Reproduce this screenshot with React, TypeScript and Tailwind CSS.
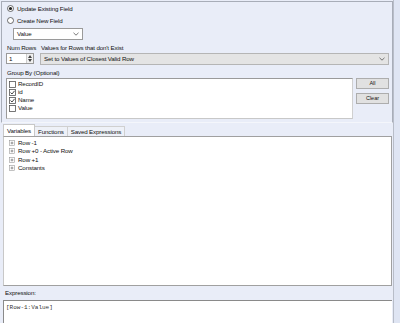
import { ReactNode } from 'react';

const font = "font-['Liberation_Sans',Arial,sans-serif]";
const txt = 'text-[6.2px] tracking-[-0.14px] text-[#111]';

function Radio({ checked, label }: { checked?: boolean; label: string }) {
    return (
        <div className="flex items-center h-[12.5px] pl-[5px] gap-[3px]">
            <svg width="7" height="7" viewBox="0 0 7 7">
                <circle cx="3.5" cy="3.5" r="3" fill="#fff" stroke="#333" strokeWidth="0.7" />
                {checked && <circle cx="3.5" cy="3.5" r="1.6" fill="#222" />}
            </svg>
            <span className={txt}>{label}</span>
        </div>
    );
}

function Check({ checked, label }: { checked?: boolean; label: string }) {
    return (
        <div className="flex items-center h-[8px] pl-[2px] gap-[2px]">
            <svg width="7" height="7" viewBox="0 0 7 7">
                <rect x="0.5" y="0.5" width="6" height="6" fill="#fff" stroke="#555" strokeWidth="0.8" />
                {checked && <path d="M1.5 3.5 L3 5 L5.6 1.8" fill="none" stroke="#333" strokeWidth="0.9" />}
            </svg>
            <span className={`${txt} leading-none`}>{label}</span>
        </div>
    );
}

function Chevron() {
    return (
        <svg width="6" height="4" viewBox="0 0 6 4">
            <path d="M0.5 0.8 L3 3.2 L5.5 0.8" fill="none" stroke="#555" strokeWidth="0.8" />
        </svg>
    );
}

function TreeItem({ children }: { children: ReactNode }) {
    return (
        <div className="flex items-center h-[8.3px] gap-[3px]">
            <svg width="6" height="6" viewBox="0 0 6 6">
                <rect x="0.5" y="0.5" width="5" height="5" fill="#fff" stroke="#999" strokeWidth="0.6" />
                <path d="M1.6 3 H4.4 M3 1.6 V4.4" stroke="#555" strokeWidth="0.6" />
            </svg>
            <span className={`${txt} leading-none`}>{children}</span>
        </div>
    );
}

function Button({ label }: { label: string }) {
    return (
        <div className="h-[11px] w-[33px] border border-[#adadad] bg-[#e1e1e1] flex items-center justify-center text-[5.5px] text-[#111]">
            {label}
        </div>
    );
}

export default function App() {
    return (
        <div className={`${font} w-[400px] h-[323px] bg-[#e9edf8] flex overflow-hidden`}>
            <div className="w-[393px] flex flex-col pl-[1px] pt-[1px]">
                {/* options group */}
                <div className="h-[122px] border-t border-l border-r border-[#a8adb8] border-b-[#f4f6fb] border-b">
                    <Radio checked label="Update Existing Field" />
                    <Radio label="Create New  Field" />
                    <div className="ml-[11px] mt-[1px] w-[70px] h-[12px] bg-white border border-[#9a9a9a] flex items-center justify-between px-[3px]">
                        <span className={txt}>Value</span>
                        <Chevron />
                    </div>
                    <div className={`flex h-[12px] items-end ${txt}`}>
                        <span className="ml-[5px] w-[34px]">Num Rows</span>
                        <span>Values for Rows that don't Exist</span>
                    </div>
                    <div className="flex gap-[6px] ml-[4px] mt-[1px]">
                        <div className="w-[28px] h-[11px] bg-white border border-[#9a9a9a] flex">
                            <span className={`flex-1 pl-[2px] leading-[10px] ${txt}`}>1</span>
                            <div className="w-[7px] bg-[#f0f0f0] border-l border-[#ccc] flex flex-col items-center justify-center gap-[1px]">
                                <svg width="4" height="3" viewBox="0 0 4 3"><path d="M0 3 L2 0 L4 3Z" fill="#444" /></svg>
                                <svg width="4" height="3" viewBox="0 0 4 3"><path d="M0 0 L2 3 L4 0Z" fill="#444" /></svg>
                            </div>
                        </div>
                        <div className="w-[349px] h-[12px] bg-[#e4e4e4] border border-[#b5b5b5] flex items-center justify-between px-[3px]">
                            <span className={txt}>Set to Values of Closest Valid Row</span>
                            <Chevron />
                        </div>
                    </div>
                    <div className={`ml-[5px] h-[12px] flex items-end ${txt}`}>Group By (Optional)</div>
                    <div className="flex ml-[4px] gap-[3px] mt-[1px]">
                        <div className="w-[347px] h-[41px] bg-white border border-[#9a9a9a] border-r-[#d0d0d0] border-b-[#c8c8c8] pt-[1px]">
                            <Check label="RecordID" />
                            <Check checked label="id" />
                            <Check checked label="Name" />
                            <Check label="Value" />
                        </div>
                        <div className="flex flex-col gap-[4px]">
                            <Button label="All" />
                            <Button label="Clear" />
                        </div>
                    </div>
                </div>

                {/* tabs */}
                <div className="flex items-end h-[13px] pl-[2px]">
                    <div className={`h-[12px] px-[3px] bg-white border border-b-0 border-[#c8c8c8] flex items-center ${txt}`}>Variables</div>
                    <div className={`h-[10px] px-[3px] bg-[#eef1f8] border border-b-0 border-l-0 border-[#d0d0d0] flex items-center ${txt}`}>Functions</div>
                    <div className={`h-[10px] px-[3px] bg-[#eef1f8] border border-b-0 border-l-0 border-[#d0d0d0] flex items-center ${txt}`}>Saved Expressions</div>
                </div>
                <div className="ml-[2px] w-[389px] h-[150px] bg-white border border-[#a0a0a0] border-l-[#c8c8c8] pt-[2px] pl-[5px]">
                    <TreeItem>Row -1</TreeItem>
                    <TreeItem>Row +0 - Active Row</TreeItem>
                    <TreeItem>Row +1</TreeItem>
                    <TreeItem>Constants</TreeItem>
                </div>

                <div className={`h-[14px] pl-[4px] flex items-center ${txt}`}>Expression:</div>
                <div className="ml-[2px] w-[389px] flex-1 bg-white border-t border-l border-[#8a8a8a] pt-[2px] pl-[2px] font-['Liberation_Mono',monospace] text-[6px] text-[#333]">
                    [Row-1:Value]
                </div>
            </div>
            <div className="flex-1 border-l border-[#b8bdc8] bg-[#dfe5f3]" />
        </div>
    );
}
